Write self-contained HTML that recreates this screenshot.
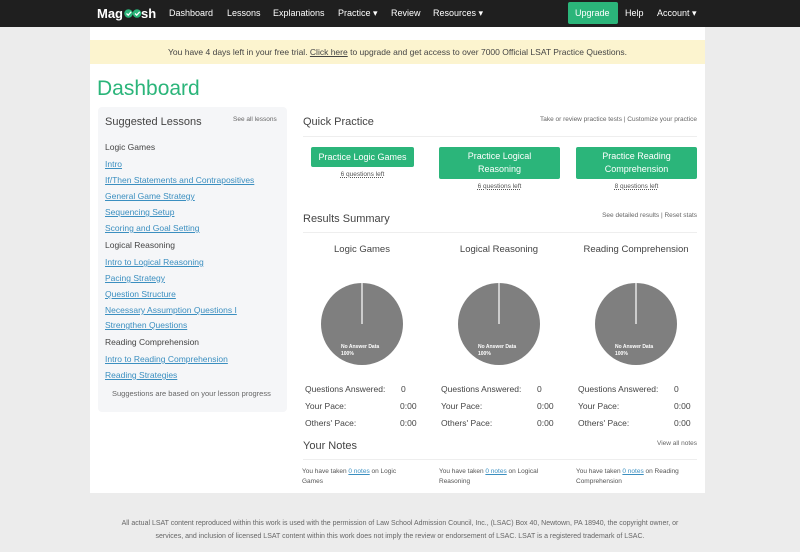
<!DOCTYPE html><html><head><style>
*{margin:0;padding:0;box-sizing:border-box}
body{width:800px;height:552px;background:#ececec;font-family:"Liberation Sans",sans-serif;position:relative;overflow:hidden;color:#333}
.a{position:absolute;white-space:nowrap}
.nav{position:absolute;left:0;top:0;width:800px;height:27px;background:#1f1f1f}
.nav span{position:absolute;top:8px;color:#fff;font-size:9px}
.g{color:#2bb57a}
.l{color:#3b8fc0;text-decoration:underline;font-size:8.5px}
.btn{position:absolute;background:#2bb57a;color:#fff;font-size:9px;text-align:center;border-radius:2px;display:flex;align-items:center;justify-content:center;line-height:13px}
.ql{position:absolute;font-size:6.5px;color:#555;text-decoration:underline dotted;text-align:center}
.s{font-size:8.5px;color:#444}
.hr{position:absolute;height:1px;background:#eee}
.r{position:absolute;right:103px;font-size:6.5px;color:#666;white-space:nowrap}
</style></head><body>
<div class="nav">
<span style="left:97px;top:6px;font-size:13px;font-weight:bold">Mag</span>
<svg class="a" style="left:124px;top:8px" width="18" height="11"><circle cx="4.5" cy="5.5" r="4.3" fill="#2bb57a"/><circle cx="13" cy="5.5" r="4.3" fill="#2bb57a"/><path d="M2.5 5.5l1.7 1.7 3-3.4M11 5.5l1.7 1.7 3-3.4" stroke="#fff" stroke-width="1.3" fill="none"/></svg>
<span style="left:141px;top:6px;font-size:13px;font-weight:bold">sh</span>
<span style="left:169px">Dashboard</span><span style="left:227px">Lessons</span><span style="left:273px">Explanations</span><span style="left:338px">Practice ▾</span><span style="left:391px">Review</span><span style="left:433px">Resources ▾</span>
<div style="position:absolute;left:568px;top:2px;width:50px;height:22px;background:#2bb57a;border-radius:2px"></div>
<span style="left:575px">Upgrade</span><span style="left:625px">Help</span><span style="left:657px">Account ▾</span>
</div>
<div class="a" style="left:90px;top:27px;width:615px;height:466px;background:#fff"></div>
<div class="a" style="left:90px;top:40px;width:615px;height:24px;background:#fcf4cf"></div>
<div class="a" style="left:90px;top:47px;width:615px;text-align:center;font-size:8.5px;color:#444">You have 4 days left in your free trial. <u>Click here</u> to upgrade and get access to over 7000 Official LSAT Practice Questions.</div>
<div class="a g" style="left:97px;top:77px;font-size:21px">Dashboard</div>
<div class="a" style="left:98px;top:107px;width:189px;height:305px;background:#f5f6f8;border-radius:4px"></div>
<div class="a" style="left:105px;top:116px;font-size:11px;color:#444">Suggested Lessons</div>
<div class="a" style="left:233px;top:116px;font-size:6.5px;color:#666">See all lessons</div>
<div class="a s" style="left:105px;top:142px">Logic Games</div>
<div class="a l" style="left:105px;top:159px">Intro</div>
<div class="a l" style="left:105px;top:175px">If/Then Statements and Contrapositives</div>
<div class="a l" style="left:105px;top:191px">General Game Strategy</div>
<div class="a l" style="left:105px;top:207px">Sequencing Setup</div>
<div class="a l" style="left:105px;top:223px">Scoring and Goal Setting</div>
<div class="a s" style="left:105px;top:240px">Logical Reasoning</div>
<div class="a l" style="left:105px;top:257px">Intro to Logical Reasoning</div>
<div class="a l" style="left:105px;top:273px">Pacing Strategy</div>
<div class="a l" style="left:105px;top:289px">Question Structure</div>
<div class="a l" style="left:105px;top:305px">Necessary Assumption Questions I</div>
<div class="a l" style="left:105px;top:320px">Strengthen Questions</div>
<div class="a s" style="left:105px;top:337px">Reading Comprehension</div>
<div class="a l" style="left:105px;top:354px">Intro to Reading Comprehension</div>
<div class="a l" style="left:105px;top:370px">Reading Strategies</div>
<div class="a" style="left:112px;top:389px;font-size:7.5px;color:#666">Suggestions are based on your lesson progress</div>

<div class="a" style="left:303px;top:116px;font-size:11px;color:#444">Quick Practice</div>
<div class="r" style="top:116px">Take or review practice tests | Customize your practice</div>
<div class="hr" style="left:303px;top:136px;width:394px"></div>
<div class="btn" style="left:311px;top:147px;width:103px;height:20px">Practice Logic Games</div>
<div class="ql" style="left:311px;top:171px;width:103px">6 questions left</div>
<div class="btn" style="left:439px;top:147px;width:121px;height:32px">Practice Logical<br>Reasoning</div>
<div class="ql" style="left:439px;top:183px;width:121px">6 questions left</div>
<div class="btn" style="left:576px;top:147px;width:121px;height:32px">Practice Reading<br>Comprehension</div>
<div class="ql" style="left:576px;top:183px;width:121px">8 questions left</div>

<div class="a" style="left:303px;top:213px;font-size:11px;color:#444">Results Summary</div>
<div class="r" style="top:212px">See detailed results | Reset stats</div>
<div class="hr" style="left:303px;top:232px;width:394px"></div>
<div class="a s" style="left:303px;top:244px;width:118px;text-align:center;font-size:9.5px">Logic Games</div>
<div class="a s" style="left:440px;top:244px;width:118px;text-align:center;font-size:9.5px">Logical Reasoning</div>
<div class="a s" style="left:577px;top:244px;width:118px;text-align:center;font-size:9.5px">Reading Comprehension</div>
<svg class="a" style="left:0;top:0" width="800" height="552">
<g font-size="5" font-weight="bold" fill="#fff" font-family="Liberation Sans">
<circle cx="362" cy="324" r="41" fill="#7f7f7f"/><line x1="362" y1="283" x2="362" y2="324" stroke="#fff" stroke-width="1.2"/><text x="341" y="348">No Answer Data</text><text x="341" y="355">100%</text>
<circle cx="499" cy="324" r="41" fill="#7f7f7f"/><line x1="499" y1="283" x2="499" y2="324" stroke="#fff" stroke-width="1.2"/><text x="478" y="348">No Answer Data</text><text x="478" y="355">100%</text>
<circle cx="636" cy="324" r="41" fill="#7f7f7f"/><line x1="636" y1="283" x2="636" y2="324" stroke="#fff" stroke-width="1.2"/><text x="615" y="348">No Answer Data</text><text x="615" y="355">100%</text>
</g></svg>
<div class="a s" style="left:305px;top:384px">Questions Answered:</div><div class="a s" style="left:401px;top:384px">0</div>
<div class="a s" style="left:305px;top:401px">Your Pace:</div><div class="a s" style="left:400px;top:401px">0:00</div>
<div class="a s" style="left:305px;top:418px">Others' Pace:</div><div class="a s" style="left:400px;top:418px">0:00</div>
<div class="a s" style="left:441px;top:384px">Questions Answered:</div><div class="a s" style="left:537px;top:384px">0</div>
<div class="a s" style="left:441px;top:401px">Your Pace:</div><div class="a s" style="left:537px;top:401px">0:00</div>
<div class="a s" style="left:441px;top:418px">Others' Pace:</div><div class="a s" style="left:537px;top:418px">0:00</div>
<div class="a s" style="left:578px;top:384px">Questions Answered:</div><div class="a s" style="left:674px;top:384px">0</div>
<div class="a s" style="left:578px;top:401px">Your Pace:</div><div class="a s" style="left:674px;top:401px">0:00</div>
<div class="a s" style="left:578px;top:418px">Others' Pace:</div><div class="a s" style="left:674px;top:418px">0:00</div>
<div class="a" style="left:303px;top:440px;font-size:11px;color:#444">Your Notes</div>
<div class="r" style="top:440px">View all notes</div>
<div class="hr" style="left:303px;top:459px;width:394px"></div>
<div class="a" style="left:302px;top:467px;font-size:6.5px;color:#555;line-height:10px">You have taken <span style="color:#3b8fc0;text-decoration:underline">0 notes</span> on Logic<br>Games</div>
<div class="a" style="left:439px;top:467px;font-size:6.5px;color:#555;line-height:10px">You have taken <span style="color:#3b8fc0;text-decoration:underline">0 notes</span> on Logical<br>Reasoning</div>
<div class="a" style="left:576px;top:467px;font-size:6.5px;color:#555;line-height:10px">You have taken <span style="color:#3b8fc0;text-decoration:underline">0 notes</span> on Reading<br>Comprehension</div>
<div class="a" style="left:115px;top:517px;width:570px;text-align:center;font-size:7px;color:#666;line-height:13px;white-space:normal">All actual LSAT content reproduced within this work is used with the permission of Law School Admission Council, Inc., (LSAC) Box 40, Newtown, PA 18940, the copyright owner, or services, and inclusion of licensed LSAT content within this work does not imply the review or endorsement of LSAC. LSAT is a registered trademark of LSAC.</div>
</body></html>
